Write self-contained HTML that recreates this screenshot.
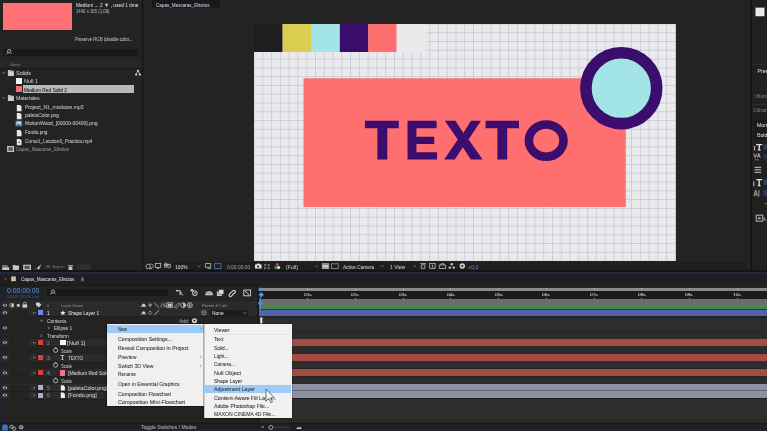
<!DOCTYPE html><html><head><meta charset="utf-8"><style>
html,body{margin:0;padding:0;width:767px;height:431px;overflow:hidden;background:#232323;}
body{position:relative;font-family:"Liberation Sans",sans-serif;}
.t{position:absolute;white-space:nowrap;line-height:1;transform-origin:0 0;-webkit-text-stroke:0.07px currentColor;filter:blur(0.25px);}
.r{position:absolute;}
svg.o{position:absolute;left:0;top:0;}
</style></head><body>
<div class="r" style="left:142px;top:0px;width:1px;height:271px;background:#151515;"></div>
<div class="r" style="left:143px;top:0px;width:2px;height:271px;background:#1f1f1f;"></div>
<div class="r" style="left:745px;top:0px;width:1.5px;height:271px;background:#1e1e1e;"></div>
<div class="r" style="left:750px;top:0px;width:2px;height:271px;background:#141414;"></div>
<div class="r" style="left:3px;top:3px;width:69px;height:27px;background:#ff6f74;"></div>
<div class="t" style="left:75.69px;top:3px;font-size:5.2px;color:#d2d2d2;transform:scaleX(0.937);">Medium ... 2 <span style="font-size:5.6px">&#9660;</span> , used 1 time</div>
<div class="t" style="left:75.72px;top:10px;font-size:4.6px;color:#a8a8a8;transform:scaleX(0.928);">1440 x 185 (1,00)</div>
<div class="t" style="left:74.69px;top:37px;font-size:5.2px;color:#b8b8b8;transform:scaleX(0.823);">Preserve RGB (disable color...</div>
<div class="r" style="left:3px;top:48.6px;width:134.5px;height:7px;background:#191919;"></div>
<svg class="o" width="767" height="431"><g stroke="#d0d0d0" stroke-width="0.8" fill="none"><circle cx="9.2" cy="51.2" r="1.7"/><path d="M8 52.5 L6.3 54.3"/></g><path d="M10.6 53.2 h1.5 l-0.75 0.9z" fill="#d0d0d0"/></svg>
<div class="r" style="left:0px;top:59.5px;width:142px;height:8.7px;background:#272727;"></div>
<div class="r" style="left:0px;top:68.2px;width:142px;height:0.8px;background:#1b1b1b;"></div>
<div class="t" style="left:9.75px;top:63px;font-size:4.2px;color:#707070;transform:scaleX(0.930);">Name</div>
<svg class="o" width="767" height="431"><path d="M2.4 72.2 l1.3 1.3 l1.3 -1.3" stroke="#a0a0a0" stroke-width="0.7" fill="none"/><path d="M7.9 70 h2.4 l0.6 0.8 h3 v5.3 h-6z" fill="#cccccc"/><path d="M7.9 71.6 h6" stroke="#9a9a9a" stroke-width="0.4"/></svg>
<div class="t" style="left:15.89px;top:71px;font-size:5.2px;color:#c0c0c0;transform:scaleX(1.065);">Solids</div>
<div class="r" style="left:16px;top:77.8px;width:6.3px;height:6.4px;background:#f6f6f6;"></div>
<div class="t" style="left:24.09px;top:79px;font-size:5.2px;color:#c0c0c0;transform:scaleX(1.059);">Null 1</div>
<div class="r" style="left:22.6px;top:85px;width:111.5px;height:8.1px;background:#b9b9b9;"></div>
<div class="r" style="left:16px;top:86px;width:6.3px;height:6.2px;background:#f36f7d;"></div>
<div class="t" style="left:24.09px;top:88px;font-size:5.2px;color:#222222;transform:scaleX(0.920);">Medium Red Solid 2</div>
<svg class="o" width="767" height="431"><path d="M2.4 97.2 l1.3 1.3 l1.3 -1.3" stroke="#a0a0a0" stroke-width="0.7" fill="none"/><path d="M7.9 95 h2.4 l0.6 0.8 h3 v5.3 h-6z" fill="#cccccc"/><path d="M7.9 96.6 h6" stroke="#9a9a9a" stroke-width="0.4"/></svg>
<div class="t" style="left:15.89px;top:96px;font-size:5.2px;color:#c0c0c0;transform:scaleX(0.982);">Materiales</div>
<svg class="o" width="767" height="431"><path d="M16.8 104.9 h3.2 l1.5 1.5 v4.9 h-4.7z" fill="#e8e8e8"/></svg>
<div class="t" style="left:24.69px;top:105px;font-size:5.2px;color:#c0c0c0;transform:scaleX(0.966);">Project_N1_mixdown.mp3</div>
<svg class="o" width="767" height="431"><path d="M16.8 112.9 h3.2 l1.5 1.5 v4.9 h-4.7z" fill="#e8e8e8"/></svg>
<div class="t" style="left:24.69px;top:113px;font-size:5.2px;color:#c0c0c0;transform:scaleX(0.935);">paletaColor.png</div>
<svg class="o" width="767" height="431"><rect x="15.2" y="120.4" width="7.2" height="6.1" rx="1" fill="#3f5f86"/><rect x="16.4" y="121.4" width="4.8" height="4" fill="#c7d3e2"/><path d="M16.4 125.4 l2 -2 l2.8 2z" fill="#45688f"/></svg>
<div class="t" style="left:24.69px;top:121px;font-size:5.2px;color:#c0c0c0;transform:scaleX(0.960);">MotionWood_[00000-00400].png</div>
<svg class="o" width="767" height="431"><path d="M16.8 129.9 h3.2 l1.5 1.5 v4.9 h-4.7z" fill="#e8e8e8"/></svg>
<div class="t" style="left:24.69px;top:130px;font-size:5.2px;color:#c0c0c0;transform:scaleX(0.906);">Fondo.png</div>
<svg class="o" width="767" height="431"><path d="M16.8 138.9 h3.2 l1.5 1.5 v4.9 h-4.7z" fill="#e8e8e8"/><path d="M17.8 142.9 h2.6 l-1.3 -1.9z" fill="#3c6aa8"/></svg>
<div class="t" style="left:24.69px;top:139px;font-size:5.2px;color:#c0c0c0;transform:scaleX(0.918);">Curso1_Leccion6_Practica.mp4</div>
<svg class="o" width="767" height="431"><rect x="7.1" y="146" width="7" height="6" fill="#c4c4c4"/><rect x="8.3" y="147.2" width="4.6" height="3.6" fill="#5e5e5e"/></svg>
<div class="t" style="left:15.89px;top:147px;font-size:5.2px;color:#8c8c8c;transform:scaleX(0.876);">Capas_Mascaras_Efectos</div>
<svg class="o" width="767" height="431"><g fill="#d4d4d4"><circle cx="138" cy="70.8" r="1.1"/><circle cx="136.1" cy="74.6" r="1.1"/><circle cx="139.9" cy="74.6" r="1.1"/></g><path d="M138 70.8 L136.1 74.6 M138 70.8 L139.9 74.6" stroke="#d4d4d4" stroke-width="0.7"/></svg>
<svg class="o" width="767" height="431"><g fill="#c6c6c6">
<path d="M2.2 265.6 h5.5 v0.9 h-5.5z M2.2 267.3 h7 v3 h-7z"/>
<path d="M12.8 264.9 h2.2 l0.6 0.7 h3.4 v4.5 h-6.2z"/>
<rect x="23.2" y="264.7" width="7.8" height="5.5"/>
<path d="M34.4 270.2 L41.3 264.3 L38.6 270.3 L37.6 268.2 z"/>
<path d="M67.8 265.3 h5.4 v0.8 h-5.4z M68.6 266.5 h3.8 v3.9 h-3.8z"/>
</g><rect x="24.5" y="265.8" width="5.2" height="3.3" fill="#5a5a5a"/>
<rect x="76.5" y="264.6" width="15" height="5.6" rx="2.8" fill="#2f2f2f"/></svg>
<div class="t" style="left:45.75px;top:265px;font-size:4.2px;color:#6a6a6a;transform:scaleX(1.831);">8 bpc</div>
<div class="r" style="left:152.3px;top:0px;width:67.3px;height:7.5px;background:#181818;"></div>
<div class="t" style="left:156.20px;top:3px;font-size:5.0px;color:#b4c2dc;transform:scaleX(0.916);">Capas_Mascaras_Efectos</div>
<svg class="o" width="767" height="431"><defs><clipPath id="cp"><rect x="254" y="24" width="422" height="237"/></clipPath></defs><rect x="254" y="24" width="422" height="237" fill="#ededf0"/><g clip-path="url(#cp)"><g stroke="#e2e1e7" stroke-width="0.3"><line x1="256.19" y1="24" x2="256.19" y2="261"/><line x1="258.39" y1="24" x2="258.39" y2="261"/><line x1="260.58" y1="24" x2="260.58" y2="261"/><line x1="264.98" y1="24" x2="264.98" y2="261"/><line x1="267.17" y1="24" x2="267.17" y2="261"/><line x1="269.37" y1="24" x2="269.37" y2="261"/><line x1="273.75" y1="24" x2="273.75" y2="261"/><line x1="275.95" y1="24" x2="275.95" y2="261"/><line x1="278.14" y1="24" x2="278.14" y2="261"/><line x1="282.53" y1="24" x2="282.53" y2="261"/><line x1="284.73" y1="24" x2="284.73" y2="261"/><line x1="286.93" y1="24" x2="286.93" y2="261"/><line x1="291.31" y1="24" x2="291.31" y2="261"/><line x1="293.51" y1="24" x2="293.51" y2="261"/><line x1="295.70" y1="24" x2="295.70" y2="261"/><line x1="300.10" y1="24" x2="300.10" y2="261"/><line x1="302.29" y1="24" x2="302.29" y2="261"/><line x1="304.49" y1="24" x2="304.49" y2="261"/><line x1="308.88" y1="24" x2="308.88" y2="261"/><line x1="311.07" y1="24" x2="311.07" y2="261"/><line x1="313.26" y1="24" x2="313.26" y2="261"/><line x1="317.65" y1="24" x2="317.65" y2="261"/><line x1="319.85" y1="24" x2="319.85" y2="261"/><line x1="322.05" y1="24" x2="322.05" y2="261"/><line x1="326.44" y1="24" x2="326.44" y2="261"/><line x1="328.63" y1="24" x2="328.63" y2="261"/><line x1="330.82" y1="24" x2="330.82" y2="261"/><line x1="335.21" y1="24" x2="335.21" y2="261"/><line x1="337.41" y1="24" x2="337.41" y2="261"/><line x1="339.61" y1="24" x2="339.61" y2="261"/><line x1="344.00" y1="24" x2="344.00" y2="261"/><line x1="346.19" y1="24" x2="346.19" y2="261"/><line x1="348.38" y1="24" x2="348.38" y2="261"/><line x1="352.77" y1="24" x2="352.77" y2="261"/><line x1="354.97" y1="24" x2="354.97" y2="261"/><line x1="357.16" y1="24" x2="357.16" y2="261"/><line x1="361.56" y1="24" x2="361.56" y2="261"/><line x1="363.75" y1="24" x2="363.75" y2="261"/><line x1="365.94" y1="24" x2="365.94" y2="261"/><line x1="370.33" y1="24" x2="370.33" y2="261"/><line x1="372.53" y1="24" x2="372.53" y2="261"/><line x1="374.73" y1="24" x2="374.73" y2="261"/><line x1="379.12" y1="24" x2="379.12" y2="261"/><line x1="381.31" y1="24" x2="381.31" y2="261"/><line x1="383.50" y1="24" x2="383.50" y2="261"/><line x1="387.89" y1="24" x2="387.89" y2="261"/><line x1="390.09" y1="24" x2="390.09" y2="261"/><line x1="392.28" y1="24" x2="392.28" y2="261"/><line x1="396.67" y1="24" x2="396.67" y2="261"/><line x1="398.87" y1="24" x2="398.87" y2="261"/><line x1="401.06" y1="24" x2="401.06" y2="261"/><line x1="405.45" y1="24" x2="405.45" y2="261"/><line x1="407.65" y1="24" x2="407.65" y2="261"/><line x1="409.85" y1="24" x2="409.85" y2="261"/><line x1="414.24" y1="24" x2="414.24" y2="261"/><line x1="416.43" y1="24" x2="416.43" y2="261"/><line x1="418.62" y1="24" x2="418.62" y2="261"/><line x1="423.01" y1="24" x2="423.01" y2="261"/><line x1="425.21" y1="24" x2="425.21" y2="261"/><line x1="427.40" y1="24" x2="427.40" y2="261"/><line x1="431.79" y1="24" x2="431.79" y2="261"/><line x1="433.99" y1="24" x2="433.99" y2="261"/><line x1="436.18" y1="24" x2="436.18" y2="261"/><line x1="440.57" y1="24" x2="440.57" y2="261"/><line x1="442.77" y1="24" x2="442.77" y2="261"/><line x1="444.96" y1="24" x2="444.96" y2="261"/><line x1="449.36" y1="24" x2="449.36" y2="261"/><line x1="451.55" y1="24" x2="451.55" y2="261"/><line x1="453.75" y1="24" x2="453.75" y2="261"/><line x1="458.13" y1="24" x2="458.13" y2="261"/><line x1="460.33" y1="24" x2="460.33" y2="261"/><line x1="462.52" y1="24" x2="462.52" y2="261"/><line x1="466.91" y1="24" x2="466.91" y2="261"/><line x1="469.11" y1="24" x2="469.11" y2="261"/><line x1="471.30" y1="24" x2="471.30" y2="261"/><line x1="475.69" y1="24" x2="475.69" y2="261"/><line x1="477.89" y1="24" x2="477.89" y2="261"/><line x1="480.08" y1="24" x2="480.08" y2="261"/><line x1="484.48" y1="24" x2="484.48" y2="261"/><line x1="486.67" y1="24" x2="486.67" y2="261"/><line x1="488.87" y1="24" x2="488.87" y2="261"/><line x1="493.25" y1="24" x2="493.25" y2="261"/><line x1="495.45" y1="24" x2="495.45" y2="261"/><line x1="497.64" y1="24" x2="497.64" y2="261"/><line x1="502.03" y1="24" x2="502.03" y2="261"/><line x1="504.23" y1="24" x2="504.23" y2="261"/><line x1="506.42" y1="24" x2="506.42" y2="261"/><line x1="510.81" y1="24" x2="510.81" y2="261"/><line x1="513.01" y1="24" x2="513.01" y2="261"/><line x1="515.20" y1="24" x2="515.20" y2="261"/><line x1="519.60" y1="24" x2="519.60" y2="261"/><line x1="521.79" y1="24" x2="521.79" y2="261"/><line x1="523.98" y1="24" x2="523.98" y2="261"/><line x1="528.38" y1="24" x2="528.38" y2="261"/><line x1="530.57" y1="24" x2="530.57" y2="261"/><line x1="532.76" y1="24" x2="532.76" y2="261"/><line x1="537.15" y1="24" x2="537.15" y2="261"/><line x1="539.35" y1="24" x2="539.35" y2="261"/><line x1="541.54" y1="24" x2="541.54" y2="261"/><line x1="545.93" y1="24" x2="545.93" y2="261"/><line x1="548.13" y1="24" x2="548.13" y2="261"/><line x1="550.33" y1="24" x2="550.33" y2="261"/><line x1="554.71" y1="24" x2="554.71" y2="261"/><line x1="556.91" y1="24" x2="556.91" y2="261"/><line x1="559.11" y1="24" x2="559.11" y2="261"/><line x1="563.50" y1="24" x2="563.50" y2="261"/><line x1="565.69" y1="24" x2="565.69" y2="261"/><line x1="567.88" y1="24" x2="567.88" y2="261"/><line x1="572.27" y1="24" x2="572.27" y2="261"/><line x1="574.47" y1="24" x2="574.47" y2="261"/><line x1="576.66" y1="24" x2="576.66" y2="261"/><line x1="581.05" y1="24" x2="581.05" y2="261"/><line x1="583.25" y1="24" x2="583.25" y2="261"/><line x1="585.44" y1="24" x2="585.44" y2="261"/><line x1="589.84" y1="24" x2="589.84" y2="261"/><line x1="592.03" y1="24" x2="592.03" y2="261"/><line x1="594.22" y1="24" x2="594.22" y2="261"/><line x1="598.62" y1="24" x2="598.62" y2="261"/><line x1="600.81" y1="24" x2="600.81" y2="261"/><line x1="603.00" y1="24" x2="603.00" y2="261"/><line x1="607.39" y1="24" x2="607.39" y2="261"/><line x1="609.59" y1="24" x2="609.59" y2="261"/><line x1="611.78" y1="24" x2="611.78" y2="261"/><line x1="616.17" y1="24" x2="616.17" y2="261"/><line x1="618.37" y1="24" x2="618.37" y2="261"/><line x1="620.57" y1="24" x2="620.57" y2="261"/><line x1="624.95" y1="24" x2="624.95" y2="261"/><line x1="627.15" y1="24" x2="627.15" y2="261"/><line x1="629.35" y1="24" x2="629.35" y2="261"/><line x1="633.73" y1="24" x2="633.73" y2="261"/><line x1="635.93" y1="24" x2="635.93" y2="261"/><line x1="638.12" y1="24" x2="638.12" y2="261"/><line x1="642.51" y1="24" x2="642.51" y2="261"/><line x1="644.71" y1="24" x2="644.71" y2="261"/><line x1="646.90" y1="24" x2="646.90" y2="261"/><line x1="651.29" y1="24" x2="651.29" y2="261"/><line x1="653.49" y1="24" x2="653.49" y2="261"/><line x1="655.68" y1="24" x2="655.68" y2="261"/><line x1="660.08" y1="24" x2="660.08" y2="261"/><line x1="662.27" y1="24" x2="662.27" y2="261"/><line x1="664.46" y1="24" x2="664.46" y2="261"/><line x1="668.86" y1="24" x2="668.86" y2="261"/><line x1="671.05" y1="24" x2="671.05" y2="261"/><line x1="673.24" y1="24" x2="673.24" y2="261"/><line x1="254" y1="26.20" x2="676" y2="26.20"/><line x1="254" y1="28.39" x2="676" y2="28.39"/><line x1="254" y1="30.59" x2="676" y2="30.59"/><line x1="254" y1="34.98" x2="676" y2="34.98"/><line x1="254" y1="37.17" x2="676" y2="37.17"/><line x1="254" y1="39.36" x2="676" y2="39.36"/><line x1="254" y1="43.75" x2="676" y2="43.75"/><line x1="254" y1="45.95" x2="676" y2="45.95"/><line x1="254" y1="48.14" x2="676" y2="48.14"/><line x1="254" y1="52.53" x2="676" y2="52.53"/><line x1="254" y1="54.73" x2="676" y2="54.73"/><line x1="254" y1="56.92" x2="676" y2="56.92"/><line x1="254" y1="61.31" x2="676" y2="61.31"/><line x1="254" y1="63.51" x2="676" y2="63.51"/><line x1="254" y1="65.70" x2="676" y2="65.70"/><line x1="254" y1="70.09" x2="676" y2="70.09"/><line x1="254" y1="72.29" x2="676" y2="72.29"/><line x1="254" y1="74.48" x2="676" y2="74.48"/><line x1="254" y1="78.88" x2="676" y2="78.88"/><line x1="254" y1="81.07" x2="676" y2="81.07"/><line x1="254" y1="83.26" x2="676" y2="83.26"/><line x1="254" y1="87.66" x2="676" y2="87.66"/><line x1="254" y1="89.85" x2="676" y2="89.85"/><line x1="254" y1="92.05" x2="676" y2="92.05"/><line x1="254" y1="96.43" x2="676" y2="96.43"/><line x1="254" y1="98.63" x2="676" y2="98.63"/><line x1="254" y1="100.82" x2="676" y2="100.82"/><line x1="254" y1="105.21" x2="676" y2="105.21"/><line x1="254" y1="107.41" x2="676" y2="107.41"/><line x1="254" y1="109.60" x2="676" y2="109.60"/><line x1="254" y1="113.99" x2="676" y2="113.99"/><line x1="254" y1="116.19" x2="676" y2="116.19"/><line x1="254" y1="118.38" x2="676" y2="118.38"/><line x1="254" y1="122.77" x2="676" y2="122.77"/><line x1="254" y1="124.97" x2="676" y2="124.97"/><line x1="254" y1="127.16" x2="676" y2="127.16"/><line x1="254" y1="131.56" x2="676" y2="131.56"/><line x1="254" y1="133.75" x2="676" y2="133.75"/><line x1="254" y1="135.94" x2="676" y2="135.94"/><line x1="254" y1="140.33" x2="676" y2="140.33"/><line x1="254" y1="142.53" x2="676" y2="142.53"/><line x1="254" y1="144.72" x2="676" y2="144.72"/><line x1="254" y1="149.12" x2="676" y2="149.12"/><line x1="254" y1="151.31" x2="676" y2="151.31"/><line x1="254" y1="153.50" x2="676" y2="153.50"/><line x1="254" y1="157.89" x2="676" y2="157.89"/><line x1="254" y1="160.09" x2="676" y2="160.09"/><line x1="254" y1="162.28" x2="676" y2="162.28"/><line x1="254" y1="166.67" x2="676" y2="166.67"/><line x1="254" y1="168.87" x2="676" y2="168.87"/><line x1="254" y1="171.06" x2="676" y2="171.06"/><line x1="254" y1="175.45" x2="676" y2="175.45"/><line x1="254" y1="177.65" x2="676" y2="177.65"/><line x1="254" y1="179.84" x2="676" y2="179.84"/><line x1="254" y1="184.23" x2="676" y2="184.23"/><line x1="254" y1="186.43" x2="676" y2="186.43"/><line x1="254" y1="188.62" x2="676" y2="188.62"/><line x1="254" y1="193.01" x2="676" y2="193.01"/><line x1="254" y1="195.21" x2="676" y2="195.21"/><line x1="254" y1="197.41" x2="676" y2="197.41"/><line x1="254" y1="201.79" x2="676" y2="201.79"/><line x1="254" y1="203.99" x2="676" y2="203.99"/><line x1="254" y1="206.18" x2="676" y2="206.18"/><line x1="254" y1="210.57" x2="676" y2="210.57"/><line x1="254" y1="212.77" x2="676" y2="212.77"/><line x1="254" y1="214.96" x2="676" y2="214.96"/><line x1="254" y1="219.35" x2="676" y2="219.35"/><line x1="254" y1="221.55" x2="676" y2="221.55"/><line x1="254" y1="223.74" x2="676" y2="223.74"/><line x1="254" y1="228.13" x2="676" y2="228.13"/><line x1="254" y1="230.33" x2="676" y2="230.33"/><line x1="254" y1="232.52" x2="676" y2="232.52"/><line x1="254" y1="236.91" x2="676" y2="236.91"/><line x1="254" y1="239.11" x2="676" y2="239.11"/><line x1="254" y1="241.30" x2="676" y2="241.30"/><line x1="254" y1="245.69" x2="676" y2="245.69"/><line x1="254" y1="247.89" x2="676" y2="247.89"/><line x1="254" y1="250.08" x2="676" y2="250.08"/><line x1="254" y1="254.47" x2="676" y2="254.47"/><line x1="254" y1="256.67" x2="676" y2="256.67"/><line x1="254" y1="258.87" x2="676" y2="258.87"/></g><g stroke="#bdbcc6" stroke-width="0.65"><line x1="254.00" y1="24" x2="254.00" y2="261"/><line x1="262.78" y1="24" x2="262.78" y2="261"/><line x1="271.56" y1="24" x2="271.56" y2="261"/><line x1="280.34" y1="24" x2="280.34" y2="261"/><line x1="289.12" y1="24" x2="289.12" y2="261"/><line x1="297.90" y1="24" x2="297.90" y2="261"/><line x1="306.68" y1="24" x2="306.68" y2="261"/><line x1="315.46" y1="24" x2="315.46" y2="261"/><line x1="324.24" y1="24" x2="324.24" y2="261"/><line x1="333.02" y1="24" x2="333.02" y2="261"/><line x1="341.80" y1="24" x2="341.80" y2="261"/><line x1="350.58" y1="24" x2="350.58" y2="261"/><line x1="359.36" y1="24" x2="359.36" y2="261"/><line x1="368.14" y1="24" x2="368.14" y2="261"/><line x1="376.92" y1="24" x2="376.92" y2="261"/><line x1="385.70" y1="24" x2="385.70" y2="261"/><line x1="394.48" y1="24" x2="394.48" y2="261"/><line x1="403.26" y1="24" x2="403.26" y2="261"/><line x1="412.04" y1="24" x2="412.04" y2="261"/><line x1="420.82" y1="24" x2="420.82" y2="261"/><line x1="429.60" y1="24" x2="429.60" y2="261"/><line x1="438.38" y1="24" x2="438.38" y2="261"/><line x1="447.16" y1="24" x2="447.16" y2="261"/><line x1="455.94" y1="24" x2="455.94" y2="261"/><line x1="464.72" y1="24" x2="464.72" y2="261"/><line x1="473.50" y1="24" x2="473.50" y2="261"/><line x1="482.28" y1="24" x2="482.28" y2="261"/><line x1="491.06" y1="24" x2="491.06" y2="261"/><line x1="499.84" y1="24" x2="499.84" y2="261"/><line x1="508.62" y1="24" x2="508.62" y2="261"/><line x1="517.40" y1="24" x2="517.40" y2="261"/><line x1="526.18" y1="24" x2="526.18" y2="261"/><line x1="534.96" y1="24" x2="534.96" y2="261"/><line x1="543.74" y1="24" x2="543.74" y2="261"/><line x1="552.52" y1="24" x2="552.52" y2="261"/><line x1="561.30" y1="24" x2="561.30" y2="261"/><line x1="570.08" y1="24" x2="570.08" y2="261"/><line x1="578.86" y1="24" x2="578.86" y2="261"/><line x1="587.64" y1="24" x2="587.64" y2="261"/><line x1="596.42" y1="24" x2="596.42" y2="261"/><line x1="605.20" y1="24" x2="605.20" y2="261"/><line x1="613.98" y1="24" x2="613.98" y2="261"/><line x1="622.76" y1="24" x2="622.76" y2="261"/><line x1="631.54" y1="24" x2="631.54" y2="261"/><line x1="640.32" y1="24" x2="640.32" y2="261"/><line x1="649.10" y1="24" x2="649.10" y2="261"/><line x1="657.88" y1="24" x2="657.88" y2="261"/><line x1="666.66" y1="24" x2="666.66" y2="261"/><line x1="675.44" y1="24" x2="675.44" y2="261"/><line x1="254" y1="24.00" x2="676" y2="24.00"/><line x1="254" y1="32.78" x2="676" y2="32.78"/><line x1="254" y1="41.56" x2="676" y2="41.56"/><line x1="254" y1="50.34" x2="676" y2="50.34"/><line x1="254" y1="59.12" x2="676" y2="59.12"/><line x1="254" y1="67.90" x2="676" y2="67.90"/><line x1="254" y1="76.68" x2="676" y2="76.68"/><line x1="254" y1="85.46" x2="676" y2="85.46"/><line x1="254" y1="94.24" x2="676" y2="94.24"/><line x1="254" y1="103.02" x2="676" y2="103.02"/><line x1="254" y1="111.80" x2="676" y2="111.80"/><line x1="254" y1="120.58" x2="676" y2="120.58"/><line x1="254" y1="129.36" x2="676" y2="129.36"/><line x1="254" y1="138.14" x2="676" y2="138.14"/><line x1="254" y1="146.92" x2="676" y2="146.92"/><line x1="254" y1="155.70" x2="676" y2="155.70"/><line x1="254" y1="164.48" x2="676" y2="164.48"/><line x1="254" y1="173.26" x2="676" y2="173.26"/><line x1="254" y1="182.04" x2="676" y2="182.04"/><line x1="254" y1="190.82" x2="676" y2="190.82"/><line x1="254" y1="199.60" x2="676" y2="199.60"/><line x1="254" y1="208.38" x2="676" y2="208.38"/><line x1="254" y1="217.16" x2="676" y2="217.16"/><line x1="254" y1="225.94" x2="676" y2="225.94"/><line x1="254" y1="234.72" x2="676" y2="234.72"/><line x1="254" y1="243.50" x2="676" y2="243.50"/><line x1="254" y1="252.28" x2="676" y2="252.28"/><line x1="254" y1="261.06" x2="676" y2="261.06"/></g></g><rect x="254" y="24" width="28.65" height="28" fill="#1e1e1e"/><rect x="282.6" y="24" width="28.45" height="28" fill="#dacd50"/><rect x="311" y="24" width="28.85" height="28" fill="#a3e4e6"/><rect x="339.8" y="24" width="28.55" height="28" fill="#3b0e6e"/><rect x="368.3" y="24" width="28.45" height="28" fill="#ff6f70"/><rect x="396.7" y="24" width="29.35" height="28" fill="#eaeaea"/><rect x="303.5" y="78.3" width="322.3" height="128.7" fill="#ff6f70"/><path d="M326.5 78.3 V100.6 H303.5" stroke="#f26a6c" stroke-width="0.6" fill="none"/><circle cx="621.3" cy="88.2" r="35.4" fill="#a3e4e6" stroke="#3b0e6e" stroke-width="11.6"/><g fill="#3b0e6e"><path d="M364.9 120.8 H398.8 V128.2 H387.3 V159.6 H377.4 V128.2 H364.9z"/><path d="M407.5 120.8 H436.6 V128.2 H416.4 V136.8 H434.2 V144 H416.4 V152.2 H437.1 V159.6 H407.5z"/><path d="M444.8 120.8 H455.4 L463.3 133 L471 120.8 H481 L468.6 139.6 L482.6 159.6 H470.8 L462.8 147.2 L454.8 159.6 H444.2 L457.8 139.6z"/><path d="M485.6 120.8 H519 V128.2 H507.2 V159.6 H497.4 V128.2 H485.6z"/></g><ellipse cx="546.2" cy="140.6" rx="17.3" ry="16.1" fill="none" stroke="#3b0e6e" stroke-width="8.6"/></svg>
<div class="r" style="left:145px;top:261.5px;width:600px;height:9.5px;background:#1e1e1e;"></div>
<svg class="o" width="767" height="431"><g stroke="#c8c8c8" stroke-width="0.75" fill="none">
<path d="M146 266.3 a2.2 2 0 1 1 2.2 1.9 l-1.4 0.6 z"/><path d="M149.5 264.7 a2.2 2 0 1 1 1.2 3.3 l0.8 0.7 h-2.5"/>
<rect x="155.3" y="263.6" width="5.4" height="3.8"/><path d="M156.8 268.4 h2.5"/>
<path d="M164.3 264.3 h6.3 M165.8 266 a1.5 1.5 0 1 1 0.01 0z"/><circle cx="165.8" cy="266.2" r="1.5"/><circle cx="169.2" cy="266.2" r="1.5"/>
<path d="M205.4 263.5 h5.2 v3.8 h-5.2z M207.5 268.3 h3.5"/>
<path d="M214.5 268.5 v-4.8 h3.6 l2.8 -0.4 v5.2z" stroke="#5a86c8"/>
<path d="M255 264.5 h1.5 l0.8 -1 h2 l0.8 1 h1.5 v4 h-6.6z" fill="#e0e0e0" stroke="none"/>
<circle cx="258.1" cy="266.5" r="1.1" fill="#1e1e1e" stroke="none"/>
<rect x="322.3" y="263.8" width="6.4" height="4.6" stroke="#d8d8d8"/>
<rect x="331.4" y="263.8" width="6.8" height="4.6" stroke="#9a9a9a"/>
<path d="M420.2 263.6 h5.8 M421.3 264.8 v3.6 h3.6 v-3.6z"/>
<rect x="429.7" y="263.5" width="5.4" height="4.8"/><path d="M432.4 264.5 v2.5 l1.8 1.6"/>
<path d="M439.3 265 h6.3 v3.5 h-6.3z M441 265 v-1.2 h3 v1.2"/>
</g>
<rect x="322.9" y="264.5" width="5.2" height="3.3" fill="#cfcfcf"/>
<g fill="#c8c8c8" opacity="0.45"><rect x="264" y="264" width="2.2" height="2.2"/><rect x="267.6" y="264" width="2.2" height="2.2"/><rect x="264" y="267" width="2.2" height="2.2"/><rect x="267.6" y="267" width="2.2" height="2.2"/></g>
<circle cx="277.3" cy="264.6" r="1.5" fill="#d04a4a"/><circle cx="276" cy="267.4" r="1.5" fill="#4a9a4a"/><circle cx="278.6" cy="267.4" r="1.5" fill="#e8e8e8"/>
<g fill="#c8c8c8"><circle cx="451.8" cy="264.2" r="1.2"/><circle cx="449.8" cy="267.6" r="1.2"/><circle cx="453.8" cy="267.6" r="1.2"/></g>
<circle cx="462.3" cy="266" r="2.7" fill="#d0d0d0"/><circle cx="462.3" cy="266" r="1.1" fill="#1e1e1e"/>
<g stroke="#a8a8a8" stroke-width="0.6" fill="none"><path d="M197.8 265.5 l1.4 1.4 l1.4 -1.4"/><path d="M315.2 265.5 l1.4 1.4 l1.4 -1.4"/><path d="M380.8 265.5 l1.4 1.4 l1.4 -1.4"/><path d="M413.2 265.5 l1.4 1.4 l1.4 -1.4"/></g></svg>
<div class="t" style="left:175.21px;top:266px;font-size:4.8px;color:#cccccc;transform:scaleX(1.000);">100%</div>
<div class="t" style="left:226.71px;top:266px;font-size:4.8px;color:#8c8c8c;transform:scaleX(1.022);">0:00:00:00</div>
<div class="t" style="left:285.71px;top:266px;font-size:4.8px;color:#bcbcbc;transform:scaleX(1.090);">(Full)</div>
<div class="t" style="left:342.91px;top:266px;font-size:4.8px;color:#c0c0c0;transform:scaleX(0.987);">Active Camera</div>
<div class="t" style="left:390.31px;top:266px;font-size:4.8px;color:#c0c0c0;transform:scaleX(1.055);">1 View</div>
<div class="t" style="left:467.51px;top:266px;font-size:4.8px;color:#4d84c8;transform:scaleX(1.111);">+0,0</div>
<div class="r" style="left:752px;top:0px;width:15px;height:271px;background:#202020;"></div>
<svg class="o" width="767" height="431"><rect x="755.3" y="7.5" width="9.3" height="8.7" fill="#f0f0f0" stroke="#555" stroke-width="0.5"/><path d="M757.5 10 h5 M757.5 11.8 h5 M757.5 13.6 h5" stroke="#c8c8c8" stroke-width="0.5"/></svg>
<div class="r" style="left:752px;top:63.5px;width:15px;height:0.8px;background:#2c2c2c;"></div>
<div class="t" style="left:757.49px;top:69px;font-size:5.2px;color:#d0d0d0;">Prese</div>
<div class="t" style="left:754.52px;top:95px;font-size:4.6px;color:#7a7a7a;">Ubuntu</div>
<div class="r" style="left:752px;top:103.5px;width:15px;height:0.6px;background:#2c2c2c;"></div>
<div class="t" style="left:753.59px;top:108px;font-size:5.2px;color:#7c7c7c;">Librar</div>
<div class="r" style="left:753px;top:119.3px;width:14px;height:10.5px;background:#1a1a1a;"></div>
<div class="r" style="left:753px;top:131px;width:14px;height:9px;background:#1a1a1a;"></div>
<div class="t" style="left:756.99px;top:122.6px;font-size:5.2px;color:#d0d0d0;">Mon</div>
<div class="t" style="left:756.99px;top:132.5px;font-size:5.2px;color:#c8c8c8;">Bold</div>
<svg class="o" width="767" height="431"><g fill="#e0e0e0">
<path d="M756.2 144 h6 v1.2 h-2.3 v4.4 h0.8 v0.9 h-3 v-0.9 h0.8 v-4.4 h-2.3z"/>
<path d="M753.4 146.4 h2.4 v0.7 h-0.8 v2.6 h0.5 v0.6 h-1.8 v-0.6 h0.5 v-2.6 h-0.8z"/>
<path d="M756.2 179 h6 v1.3 h-2.3 v5 h0.8 v1 h-3 v-1 h0.8 v-5 h-2.3z"/>
<path d="M753.4 181.6 h0.9 v4.6 h-0.9z"/>
</g>
<g stroke="#dcdcdc" stroke-width="0.7" fill="none">
<path d="M753.6 153.6 l1.6 4 l1.6 -4 M757.4 157.6 l1.4 -4 l1.4 4 M758 156.2 h1.6"/>
<path d="M754.8 159.8 h4" stroke-width="0.5"/>
<path d="M754.6 167.3 h6.6 M754.6 169.8 h6.6 M754.6 172.3 h6.6" stroke-width="0.9"/>
<path d="M754 196.3 l1.7 -6 l1.7 6 M754.7 194.2 h2 M758.8 190 v6.5"/>
<rect x="756.3" y="215.2" width="6.4" height="6" stroke="#b8b8b8" stroke-width="1"/>
<path d="M764.6 203.6 h2.4" stroke="#9a9a9a"/>
</g>
<rect x="758.2" y="217.3" width="2.4" height="1.9" fill="#b8b8b8"/>
<rect x="763.5" y="144.5" width="3.5" height="5" fill="#2d3f5c"/><rect x="763.5" y="154" width="3.5" height="5" fill="#2a2f38"/>
<rect x="763.5" y="179.5" width="3.5" height="5.5" fill="#2d3f5c"/><rect x="763.5" y="190" width="3.5" height="5.5" fill="#2d3f5c"/>
<path d="M764.2 217 v3 h2" stroke="#b8b8b8" stroke-width="0.8" fill="none"/></svg>
<div class="r" style="left:0px;top:271px;width:767px;height:160px;background:#232323;"></div>
<div class="r" style="left:0px;top:270.4px;width:767px;height:1.2px;background:#141414;"></div>
<div class="r" style="left:0px;top:271.6px;width:767px;height:2.4px;background:#1f2a3d;"></div>
<div class="r" style="left:0px;top:273px;width:1.2px;height:158px;background:#1c2433;"></div>
<div class="r" style="left:0px;top:274px;width:767px;height:10.5px;background:#1f1f1f;"></div>
<svg class="o" width="767" height="431"><path d="M4.8 278.2 l1.6 1.6 M6.4 278.2 l-1.6 1.6" stroke="#8a8a8a" stroke-width="0.6"/><rect x="11.2" y="276.5" width="4.6" height="4.7" fill="#d9c9a8"/><path d="M11.2 278.8 h4.6" stroke="#a08f70" stroke-width="0.4"/><path d="M81 278 h3 M81 279.4 h3 M81 280.8 h3" stroke="#a0a0a0" stroke-width="0.7"/></svg>
<div class="t" style="left:20.79px;top:277px;font-size:5.2px;color:#d0d0d0;transform:scaleX(0.879);">Capas_Mascaras_Efectos</div>
<div class="r" style="left:1.2px;top:284.5px;width:766px;height:0.8px;background:#1a1a1a;"></div>
<div class="t" style="left:6.60px;top:288px;font-size:6.6px;color:#5596e4;transform:scaleX(1.039);-webkit-text-stroke:0;">0:00:00:00</div>
<div class="t" style="left:6.75px;top:295.3px;font-size:4.2px;color:#2d5386;transform:scaleX(0.978);">00000 (30.00 fps)</div>
<div class="r" style="left:47px;top:288.9px;width:121.1px;height:7.3px;background:#181818;"></div>
<svg class="o" width="767" height="431"><g stroke="#d0d0d0" stroke-width="0.8" fill="none"><circle cx="53" cy="291.6" r="1.6"/><path d="M51.9 292.8 L50.3 294.5"/></g><path d="M54.6 293.5 h1.4 l-0.7 0.9z" fill="#d0d0d0"/></svg>
<svg class="o" width="767" height="431"><g fill="none" stroke="#d4d4d4" stroke-width="1">
<path d="M177.2 290.8 h3 v4.2 M180.2 293 h1.8 M181.6 293.8 l1.2 1.6"/>
<circle cx="194.8" cy="293.2" r="2.4"/>
<path d="M229.5 294.2 l3.6 -3.6 a1.3 1.3 0 0 1 1.9 1.9 l-3.6 3.6 a1.3 1.3 0 0 1 -1.9 -1.9z" stroke-width="1.1"/>
<rect x="243.8" y="290" width="6.8" height="5.8" stroke-width="0.9"/><path d="M245.2 291.2 l4 3.6"/>
</g>
<circle cx="176.8" cy="290.6" r="0.9" fill="#d4d4d4"/>
<circle cx="191.9" cy="290.3" r="1.3" fill="#d4d4d4"/>
<path d="M193.6 293.2 h2.4 M194.8 292 v2.4" stroke="#d4d4d4" stroke-width="0.6"/>
<path d="M205.2 295.3 a3.9 4 0 0 1 7.8 0z" fill="#c8c8c8"/><path d="M206.6 293.4 h5" stroke="#5a5a5a" stroke-width="0.6"/>
<rect x="216.9" y="291.4" width="5" height="4.6" fill="#cfcfcf"/><rect x="218.8" y="289.6" width="5" height="4.6" fill="#dadada" stroke="#3a3a3a" stroke-width="0.5"/></svg>
<div class="r" style="left:257.4px;top:284.5px;width:2px;height:147px;background:#1a1a1a;"></div>
<div class="r" style="left:1.2px;top:301px;width:256.2px;height:8px;background:#2a2a2a;"></div>
<svg class="o" width="767" height="431"><g fill="#d0d0d0">
<path d="M2.6 305.3 q2.35 -2.8 4.7 0 q-2.35 2.8 -4.7 0z"/>
<circle cx="11.7" cy="305.3" r="2.3"/>
<circle cx="18.3" cy="305.3" r="1.5"/>
<rect x="22.5" y="304.3" width="4.6" height="3.3"/>
<path d="M36 302.4 h3.2 l2.2 2.4 l-2.6 2.6 l-2.8 -2.2z" fill="#d8c8d8"/>
</g>
<circle cx="4.95" cy="305.3" r="1" fill="#262626"/>
<path d="M11.7 303 v4.6 a2.3 2.3 0 0 1 0 -4.6z" fill="#5a5a5a"/>
<path d="M23.5 304.3 v-0.8 a1.3 1.3 0 0 1 2.6 0 v0.8" stroke="#d0d0d0" stroke-width="0.7" fill="none"/>
<g fill="#c8c8c8"><path d="M141.6 306.2 a2 2.6 0 0 1 4 0z"/><rect x="140.8" y="306" width="5.4" height="0.7"/></g><circle cx="150.1" cy="305" r="1.8" fill="#8a8a8a"/>
<g fill="none" stroke="#c8c8c8" stroke-width="0.7">
<path d="M154.2 303 l5 4.6"/><rect x="166.9" y="302.8" width="5.8" height="4.8"/>
<path d="M174.5 307 l3.6 -3.6 a1 1 0 0 1 1.4 1.4 l-3.6 3.6z"/>
<circle cx="183.2" cy="305.2" r="2.4"/><circle cx="189.8" cy="305.2" r="2.6"/><path d="M189.8 302.6 v5.2 M187.2 305.2 h5.2"/>
</g>
<rect x="167.9" y="303.7" width="3.8" height="3" fill="#c8c8c8"/>
<path d="M183.2 302.8 a2.4 2.4 0 0 1 0 4.8z" fill="#c8c8c8"/></svg>
<svg class="o" width="767" height="431"><g stroke="#c8c8c8" stroke-width="0.6" fill="none"><path d="M160.8 307.5 l1.4 -4.6"/><path d="M163.8 307.3 l0.6 -3.2 q0.2 -0.9 1 -0.8 M163.3 305 h1.6"/><path d="M165 305.3 l1.6 2 M166.6 305.3 l-1.6 2"/></g></svg>
<div class="t" style="left:46.65px;top:304px;font-size:4.2px;color:#6c6c6c;">#</div>
<div class="t" style="left:60.75px;top:304px;font-size:4.2px;color:#7e7e7e;transform:scaleX(0.982);">Layer Name</div>
<div class="t" style="left:201.55px;top:304px;font-size:4.2px;color:#848484;transform:scaleX(1.007);">Parent &amp; Link</div>
<div class="r" style="left:1.2px;top:309.0px;width:256.2px;height:7.4px;background:#2b2b2b;"></div>
<div class="r" style="left:1.2px;top:316.1px;width:256.2px;height:0.5px;background:#1f1f1f;"></div>
<svg class="o" width="767" height="431"><path d="M2.6 312.7 q2.35 -2.8 4.7 0 q-2.35 2.8 -4.7 0z" fill="#d0d0d0"/><circle cx="4.95" cy="312.7" r="1" fill="#2b2b2b"/></svg>
<div class="r" style="left:9.2px;top:309.3px;width:20px;height:6.8px;background:#232323;"></div>
<svg class="o" width="767" height="431"><path d="M33 312.09999999999997 l1.3 1.3 l1.3 -1.3" stroke="#b0b0b0" stroke-width="0.7" fill="none"/></svg>
<div class="r" style="left:37.4px;top:309.65px;width:5.9px;height:6.0px;background:#1a1a1a;"></div>
<div class="r" style="left:37.8px;top:310.05px;width:5.1px;height:5.2px;background:#7084f4;"></div>
<div class="t" style="left:46.90px;top:311px;font-size:5.0px;color:#d8d8d8;">1</div>
<svg class="o" width="767" height="431"><path d="M62.9 310.2 l0.8 1.75 l1.9 0.15 l-1.45 1.25 l0.5 1.85 l-1.75 -1 l-1.75 1 l0.5 -1.85 l-1.45 -1.25 l1.9 -0.15z" fill="#e8e8e8"/></svg>
<div class="t" style="left:68.39px;top:311px;font-size:5.2px;color:#d4d4d4;transform:scaleX(0.924);">Shape Layer 1</div>
<div class="r" style="left:1.2px;top:316.90000000000003px;width:256.2px;height:7.4px;background:#232323;"></div>
<svg class="o" width="767" height="431"><path d="M40.1 319.8 l1.5 1.2 l1.5 -1.2" stroke="#b0b0b0" stroke-width="0.7" fill="none"/></svg>
<div class="t" style="left:46.99px;top:319px;font-size:5.2px;color:#c0c0c0;transform:scaleX(0.929);">Contents</div>
<div class="r" style="left:1.2px;top:324.3px;width:256.2px;height:7.4px;background:#232323;"></div>
<svg class="o" width="767" height="431"><path d="M48.2 326.6 l1.2 1.4 l-1.2 1.4" stroke="#b0b0b0" stroke-width="0.7" fill="none"/></svg>
<div class="t" style="left:54.29px;top:326px;font-size:5.2px;color:#c0c0c0;transform:scaleX(0.927);">Ellipse 1</div>
<div class="r" style="left:1.2px;top:331.90000000000003px;width:256.2px;height:7.4px;background:#232323;"></div>
<svg class="o" width="767" height="431"><path d="M40.6 334.20000000000005 l1.2 1.4 l-1.2 1.4" stroke="#b0b0b0" stroke-width="0.7" fill="none"/></svg>
<div class="t" style="left:46.99px;top:334px;font-size:5.2px;color:#c0c0c0;transform:scaleX(0.933);">Transform</div>
<div class="r" style="left:1.2px;top:338.90000000000003px;width:256.2px;height:7.4px;background:#2b2b2b;"></div>
<div class="r" style="left:1.2px;top:346.00000000000006px;width:256.2px;height:0.5px;background:#1f1f1f;"></div>
<svg class="o" width="767" height="431"><path d="M2.6 342.6 q2.35 -2.8 4.7 0 q-2.35 2.8 -4.7 0z" fill="#d0d0d0"/><circle cx="4.95" cy="342.6" r="1" fill="#2b2b2b"/></svg>
<div class="r" style="left:9.2px;top:339.20000000000005px;width:20px;height:6.8px;background:#232323;"></div>
<svg class="o" width="767" height="431"><path d="M33 342.0 l1.3 1.3 l1.3 -1.3" stroke="#b0b0b0" stroke-width="0.7" fill="none"/></svg>
<div class="r" style="left:37.4px;top:339.55px;width:5.9px;height:6.0px;background:#1a1a1a;"></div>
<div class="r" style="left:37.8px;top:339.95000000000005px;width:5.1px;height:5.2px;background:#d2433c;"></div>
<div class="t" style="left:46.90px;top:341px;font-size:5.0px;color:#8a8a9c;">2</div>
<div class="r" style="left:60px;top:340.1px;width:5.7px;height:5.1px;background:#f4f4f4;"></div>
<div class="t" style="left:67.49px;top:341px;font-size:5.2px;color:#c8c8c8;transform:scaleX(1.138);">[Null 1]</div>
<div class="r" style="left:1.2px;top:346.3px;width:256.2px;height:7.4px;background:#232323;"></div>
<svg class="o" width="767" height="431"><circle cx="55.6" cy="350.3" r="2.1" stroke="#d0d0d0" stroke-width="0.8" fill="none"/><path d="M54.8 347.6 h1.6" stroke="#d0d0d0" stroke-width="0.7"/></svg>
<div class="t" style="left:61.29px;top:349px;font-size:5.2px;color:#bcbcbc;transform:scaleX(0.842);">Scale</div>
<div class="r" style="left:1.2px;top:353.7px;width:256.2px;height:7.4px;background:#2b2b2b;"></div>
<div class="r" style="left:1.2px;top:360.8px;width:256.2px;height:0.5px;background:#1f1f1f;"></div>
<svg class="o" width="767" height="431"><path d="M2.6 357.4 q2.35 -2.8 4.7 0 q-2.35 2.8 -4.7 0z" fill="#d0d0d0"/><circle cx="4.95" cy="357.4" r="1" fill="#2b2b2b"/></svg>
<div class="r" style="left:9.2px;top:354.0px;width:20px;height:6.8px;background:#232323;"></div>
<svg class="o" width="767" height="431"><path d="M33 356.79999999999995 l1.3 1.3 l1.3 -1.3" stroke="#b0b0b0" stroke-width="0.7" fill="none"/></svg>
<div class="r" style="left:37.4px;top:354.34999999999997px;width:5.9px;height:6.0px;background:#1a1a1a;"></div>
<div class="r" style="left:37.8px;top:354.75px;width:5.1px;height:5.2px;background:#d2433c;"></div>
<div class="t" style="left:46.90px;top:356px;font-size:5.0px;color:#8a8a9c;">3</div>
<svg class="o" width="767" height="431"><path d="M60.5 355.2 h3.7 v0.9 h-1.4 v3.3 h0.6 v0.7 h-2.1 v-0.7 h0.6 v-3.3 h-1.4z" fill="#dcdcdc"/></svg>
<div class="t" style="left:67.99px;top:356px;font-size:5.2px;color:#c8c8c8;transform:scaleX(0.875);">TEXTO</div>
<div class="r" style="left:1.2px;top:361.2px;width:256.2px;height:7.4px;background:#232323;"></div>
<svg class="o" width="767" height="431"><circle cx="55.6" cy="365.2" r="2.1" stroke="#d0d0d0" stroke-width="0.8" fill="none"/><path d="M54.8 362.5 h1.6" stroke="#d0d0d0" stroke-width="0.7"/></svg>
<div class="t" style="left:61.29px;top:364px;font-size:5.2px;color:#bcbcbc;transform:scaleX(0.842);">Scale</div>
<div class="r" style="left:1.2px;top:369.2px;width:256.2px;height:7.4px;background:#2b2b2b;"></div>
<div class="r" style="left:1.2px;top:376.3px;width:256.2px;height:0.5px;background:#1f1f1f;"></div>
<svg class="o" width="767" height="431"><path d="M2.6 372.9 q2.35 -2.8 4.7 0 q-2.35 2.8 -4.7 0z" fill="#d0d0d0"/><circle cx="4.95" cy="372.9" r="1" fill="#2b2b2b"/></svg>
<div class="r" style="left:9.2px;top:369.5px;width:20px;height:6.8px;background:#232323;"></div>
<svg class="o" width="767" height="431"><path d="M33 372.29999999999995 l1.3 1.3 l1.3 -1.3" stroke="#b0b0b0" stroke-width="0.7" fill="none"/></svg>
<div class="r" style="left:37.4px;top:369.84999999999997px;width:5.9px;height:6.0px;background:#1a1a1a;"></div>
<div class="r" style="left:37.8px;top:370.25px;width:5.1px;height:5.2px;background:#d2433c;"></div>
<div class="t" style="left:46.90px;top:371px;font-size:5.0px;color:#8a8a9c;">4</div>
<div class="r" style="left:60.2px;top:370.2px;width:5.3px;height:5.4px;background:#f27282;"></div>
<div class="t" style="left:67.79px;top:371px;font-size:5.2px;color:#c8c8c8;transform:scaleX(0.958);">[Medium Red Solid 2]</div>
<div class="r" style="left:1.2px;top:376.7px;width:256.2px;height:7.4px;background:#232323;"></div>
<svg class="o" width="767" height="431"><circle cx="55.6" cy="380.7" r="2.1" stroke="#d0d0d0" stroke-width="0.8" fill="none"/><path d="M54.8 378.0 h1.6" stroke="#d0d0d0" stroke-width="0.7"/></svg>
<div class="t" style="left:61.29px;top:379px;font-size:5.2px;color:#bcbcbc;transform:scaleX(0.842);">Scale</div>
<div class="r" style="left:1.2px;top:384.2px;width:256.2px;height:7.4px;background:#2b2b2b;"></div>
<div class="r" style="left:1.2px;top:391.3px;width:256.2px;height:0.5px;background:#1f1f1f;"></div>
<svg class="o" width="767" height="431"><path d="M2.6 387.9 q2.35 -2.8 4.7 0 q-2.35 2.8 -4.7 0z" fill="#d0d0d0"/><circle cx="4.95" cy="387.9" r="1" fill="#2b2b2b"/></svg>
<div class="r" style="left:9.2px;top:384.5px;width:20px;height:6.8px;background:#232323;"></div>
<svg class="o" width="767" height="431"><path d="M33.4 386.5 l1.3 1.4 l-1.3 1.4" stroke="#b0b0b0" stroke-width="0.7" fill="none"/></svg>
<div class="r" style="left:37.4px;top:384.84999999999997px;width:5.9px;height:6.0px;background:#1a1a1a;"></div>
<div class="r" style="left:37.8px;top:385.25px;width:5.1px;height:5.2px;background:#aeadd0;"></div>
<div class="t" style="left:46.90px;top:386px;font-size:5.0px;color:#8a8a9c;">5</div>
<svg class="o" width="767" height="431"><path d="M60.8 385.2 h2.6 l1.5 1.5 v3.9 h-4.1z" fill="#eeeeee"/></svg>
<div class="t" style="left:67.79px;top:386px;font-size:5.2px;color:#c8c8c8;transform:scaleX(1.007);">[paletaColor.png]</div>
<div class="r" style="left:1.2px;top:391.5px;width:256.2px;height:7.4px;background:#2b2b2b;"></div>
<div class="r" style="left:1.2px;top:398.6px;width:256.2px;height:0.5px;background:#1f1f1f;"></div>
<svg class="o" width="767" height="431"><path d="M2.6 395.2 q2.35 -2.8 4.7 0 q-2.35 2.8 -4.7 0z" fill="#d0d0d0"/><circle cx="4.95" cy="395.2" r="1" fill="#2b2b2b"/></svg>
<div class="r" style="left:9.2px;top:391.8px;width:20px;height:6.8px;background:#232323;"></div>
<svg class="o" width="767" height="431"><path d="M33.4 393.8 l1.3 1.4 l-1.3 1.4" stroke="#b0b0b0" stroke-width="0.7" fill="none"/></svg>
<div class="r" style="left:37.4px;top:392.15px;width:5.9px;height:6.0px;background:#1a1a1a;"></div>
<div class="r" style="left:37.8px;top:392.55px;width:5.1px;height:5.2px;background:#aeadd0;"></div>
<div class="t" style="left:46.90px;top:393px;font-size:5.0px;color:#8a8a9c;">6</div>
<svg class="o" width="767" height="431"><path d="M60.8 392.5 h2.6 l1.5 1.5 v3.9 h-4.1z" fill="#eeeeee"/></svg>
<div class="t" style="left:67.79px;top:393px;font-size:5.2px;color:#c8c8c8;transform:scaleX(1.034);">[Fondo.png]</div>
<svg class="o" width="767" height="431"><path d="M2.6 328.0 q2.35 -2.8 4.7 0 q-2.35 2.8 -4.7 0z" fill="#d0d0d0"/><circle cx="4.95" cy="328.0" r="1" fill="#2b2b2b"/></svg>
<svg class="o" width="767" height="431"><g fill="#c8c8c8"><path d="M141.6 313.8 a2 2.6 0 0 1 4 0z"/><rect x="140.8" y="313.6" width="5.4" height="0.7"/></g>
<path d="M150.2 310.9 l1.7 1.8 l-1.7 1.8 l-1.7 -1.8z" fill="none" stroke="#c8c8c8" stroke-width="0.6"/>
<path d="M154.2 315 l5 -4.8" stroke="#d0d0d0" stroke-width="0.8"/></svg>
<div class="r" style="left:209.6px;top:309.5px;width:38px;height:6.2px;background:#1c1c1c;"></div>
<svg class="o" width="767" height="431"><circle cx="203.9" cy="312.7" r="2.2" stroke="#c0c0c0" stroke-width="0.7" fill="none"/><path d="M202.9 312.7 h2" stroke="#c0c0c0" stroke-width="0.6"/><path d="M243.8 312.4 l1.2 1.2 l1.2 -1.2" stroke="#b0b0b0" stroke-width="0.7" fill="none"/></svg>
<div class="t" style="left:212.19px;top:311px;font-size:5.2px;color:#d0d0d0;transform:scaleX(0.951);">None</div>
<div class="t" style="left:179.49px;top:318.6px;font-size:5.2px;color:#9c9c9c;transform:scaleX(0.965);">Add:</div>
<svg class="o" width="767" height="431"><circle cx="194.5" cy="320.7" r="2.5" fill="#e4e4e4"/><circle cx="194.5" cy="320.7" r="1.1" fill="#262626"/></svg>
<div class="r" style="left:259.4px;top:309.0px;width:507.6px;height:7.4px;background:#2d2d2d;"></div>
<div class="r" style="left:259.4px;top:316.0px;width:507.6px;height:0.7px;background:#262626;"></div>
<div class="r" style="left:259.4px;top:316.90000000000003px;width:507.6px;height:7.4px;background:#2d2d2d;"></div>
<div class="r" style="left:259.4px;top:323.90000000000003px;width:507.6px;height:0.7px;background:#262626;"></div>
<div class="r" style="left:259.4px;top:324.3px;width:507.6px;height:7.4px;background:#2d2d2d;"></div>
<div class="r" style="left:259.4px;top:331.3px;width:507.6px;height:0.7px;background:#262626;"></div>
<div class="r" style="left:259.4px;top:331.90000000000003px;width:507.6px;height:7.4px;background:#2d2d2d;"></div>
<div class="r" style="left:259.4px;top:338.90000000000003px;width:507.6px;height:0.7px;background:#262626;"></div>
<div class="r" style="left:259.4px;top:338.90000000000003px;width:507.6px;height:7.4px;background:#2d2d2d;"></div>
<div class="r" style="left:259.4px;top:345.90000000000003px;width:507.6px;height:0.7px;background:#262626;"></div>
<div class="r" style="left:259.4px;top:346.3px;width:507.6px;height:7.4px;background:#2d2d2d;"></div>
<div class="r" style="left:259.4px;top:353.3px;width:507.6px;height:0.7px;background:#262626;"></div>
<div class="r" style="left:259.4px;top:353.7px;width:507.6px;height:7.4px;background:#2d2d2d;"></div>
<div class="r" style="left:259.4px;top:360.7px;width:507.6px;height:0.7px;background:#262626;"></div>
<div class="r" style="left:259.4px;top:361.2px;width:507.6px;height:7.4px;background:#2d2d2d;"></div>
<div class="r" style="left:259.4px;top:368.2px;width:507.6px;height:0.7px;background:#262626;"></div>
<div class="r" style="left:259.4px;top:369.2px;width:507.6px;height:7.4px;background:#2d2d2d;"></div>
<div class="r" style="left:259.4px;top:376.2px;width:507.6px;height:0.7px;background:#262626;"></div>
<div class="r" style="left:259.4px;top:376.7px;width:507.6px;height:7.4px;background:#2d2d2d;"></div>
<div class="r" style="left:259.4px;top:383.7px;width:507.6px;height:0.7px;background:#262626;"></div>
<div class="r" style="left:259.4px;top:384.2px;width:507.6px;height:7.4px;background:#2d2d2d;"></div>
<div class="r" style="left:259.4px;top:391.2px;width:507.6px;height:0.7px;background:#262626;"></div>
<div class="r" style="left:259.4px;top:391.5px;width:507.6px;height:7.4px;background:#2d2d2d;"></div>
<div class="r" style="left:259.4px;top:398.5px;width:507.6px;height:0.7px;background:#262626;"></div>
<div class="r" style="left:259.4px;top:284.5px;width:507.6px;height:3.2px;background:#232323;"></div>
<div class="r" style="left:258.5px;top:287.6px;width:508.5px;height:3.7px;background:#8a8a8a;"></div>
<div class="r" style="left:259.4px;top:291.3px;width:507.6px;height:7.3px;background:#1b1b1b;"></div>
<div class="t" style="left:303.67px;top:293px;font-size:4.2px;color:#c4c4c4;transform:scaleX(1.135);">01s</div>
<div class="r" style="left:307.21999999999997px;top:297.6px;width:0.7px;height:1.6px;background:#a0a0a0;"></div>
<div class="r" style="left:307.21999999999997px;top:288.3px;width:0.6px;height:1.6px;background:#a8a8a8;"></div>
<div class="t" style="left:351.39px;top:293px;font-size:4.2px;color:#c4c4c4;transform:scaleX(1.135);">02s</div>
<div class="r" style="left:354.94px;top:297.6px;width:0.7px;height:1.6px;background:#a0a0a0;"></div>
<div class="r" style="left:354.94px;top:288.3px;width:0.6px;height:1.6px;background:#a8a8a8;"></div>
<div class="t" style="left:399.11px;top:293px;font-size:4.2px;color:#c4c4c4;transform:scaleX(1.135);">03s</div>
<div class="r" style="left:402.66px;top:297.6px;width:0.7px;height:1.6px;background:#a0a0a0;"></div>
<div class="r" style="left:402.66px;top:288.3px;width:0.6px;height:1.6px;background:#a8a8a8;"></div>
<div class="t" style="left:446.83px;top:293px;font-size:4.2px;color:#c4c4c4;transform:scaleX(1.135);">04s</div>
<div class="r" style="left:450.38px;top:297.6px;width:0.7px;height:1.6px;background:#a0a0a0;"></div>
<div class="r" style="left:450.38px;top:288.3px;width:0.6px;height:1.6px;background:#a8a8a8;"></div>
<div class="t" style="left:494.55px;top:293px;font-size:4.2px;color:#c4c4c4;transform:scaleX(1.135);">05s</div>
<div class="r" style="left:498.09999999999997px;top:297.6px;width:0.7px;height:1.6px;background:#a0a0a0;"></div>
<div class="r" style="left:498.09999999999997px;top:288.3px;width:0.6px;height:1.6px;background:#a8a8a8;"></div>
<div class="t" style="left:542.27px;top:293px;font-size:4.2px;color:#c4c4c4;transform:scaleX(1.135);">06s</div>
<div class="r" style="left:545.82px;top:297.6px;width:0.7px;height:1.6px;background:#a0a0a0;"></div>
<div class="r" style="left:545.82px;top:288.3px;width:0.6px;height:1.6px;background:#a8a8a8;"></div>
<div class="t" style="left:589.99px;top:293px;font-size:4.2px;color:#c4c4c4;transform:scaleX(1.135);">07s</div>
<div class="r" style="left:593.54px;top:297.6px;width:0.7px;height:1.6px;background:#a0a0a0;"></div>
<div class="r" style="left:593.54px;top:288.3px;width:0.6px;height:1.6px;background:#a8a8a8;"></div>
<div class="t" style="left:637.71px;top:293px;font-size:4.2px;color:#c4c4c4;transform:scaleX(1.135);">08s</div>
<div class="r" style="left:641.26px;top:297.6px;width:0.7px;height:1.6px;background:#a0a0a0;"></div>
<div class="r" style="left:641.26px;top:288.3px;width:0.6px;height:1.6px;background:#a8a8a8;"></div>
<div class="t" style="left:685.43px;top:293px;font-size:4.2px;color:#c4c4c4;transform:scaleX(1.135);">09s</div>
<div class="r" style="left:688.98px;top:297.6px;width:0.7px;height:1.6px;background:#a0a0a0;"></div>
<div class="r" style="left:688.98px;top:288.3px;width:0.6px;height:1.6px;background:#a8a8a8;"></div>
<div class="t" style="left:733.15px;top:293px;font-size:4.2px;color:#c4c4c4;transform:scaleX(1.135);">10s</div>
<div class="r" style="left:736.7px;top:297.6px;width:0.7px;height:1.6px;background:#a0a0a0;"></div>
<div class="r" style="left:736.7px;top:288.3px;width:0.6px;height:1.6px;background:#a8a8a8;"></div>
<div class="r" style="left:259.4px;top:298.6px;width:507.6px;height:7.4px;background:#6c6c6c;"></div>
<div class="r" style="left:259.4px;top:306.2px;width:507.6px;height:3.0px;background:#3f8b52;"></div>
<div class="r" style="left:259.4px;top:309.2px;width:507.6px;height:0.8px;background:#2b3a33;"></div>
<div class="r" style="left:259.4px;top:310px;width:507.6px;height:6px;background:#5462a9;"></div>
<div class="r" style="left:259.4px;top:316px;width:507.6px;height:1.6px;background:#1f2424;"></div>
<div class="r" style="left:259.4px;top:398.4px;width:507.6px;height:20.6px;background:#2e2e2e;"></div>
<div class="r" style="left:259.4px;top:419px;width:507.6px;height:4px;background:#292929;"></div>
<div class="r" style="left:259.4px;top:338.6px;width:507.6px;height:7.3px;background:#a44b45;"></div>
<div class="r" style="left:259.4px;top:353.7px;width:507.6px;height:7.3px;background:#a44b45;"></div>
<div class="r" style="left:259.4px;top:368.6px;width:507.6px;height:7.3px;background:#a44b45;"></div>
<div class="r" style="left:259.4px;top:384.1px;width:507.6px;height:5.9px;background:#8e90a4;"></div>
<div class="r" style="left:259.4px;top:390.0px;width:507.6px;height:0.8px;background:#5f6070;"></div>
<div class="r" style="left:259.4px;top:390.8px;width:507.6px;height:6.8px;background:#8e90a4;"></div>
<div class="r" style="left:259.4px;top:397.6px;width:507.6px;height:0.8px;background:#1f1f1f;"></div>
<svg class="o" width="767" height="431"><circle cx="260.3" cy="289.4" r="1.9" fill="#4b8ded"/><path d="M261.2 292 l2.8 2.8 l-2.8 2.8 l-2.8 -2.8z" fill="#4b8ded"/><rect x="259.8" y="297" width="1" height="13" fill="#4b8ded"/><circle cx="260.2" cy="303.3" r="2" fill="#4b8ded"/><rect x="260.3" y="318" width="2" height="5.5" fill="#e8e8e8"/><rect x="260" y="317.5" width="2.6" height="0.8" fill="#e8e8e8"/></svg>
<div class="r" style="left:0px;top:423px;width:767px;height:6.2px;background:#202020;"></div>
<div class="r" style="left:0px;top:422.6px;width:767px;height:0.5px;background:#181818;"></div>
<div class="r" style="left:0px;top:429.2px;width:767px;height:1.8px;background:#1c2433;"></div>
<svg class="o" width="767" height="431"><path d="M2.2 428 a2.9 2.9 0 1 1 5.6 0 v2.5 h-5.6z" fill="#3e74b8"/>
<g fill="none" stroke="#c4c4c4" stroke-width="0.8"><circle cx="11.5" cy="426.8" r="1.6"/><circle cx="14.2" cy="428.6" r="1.6"/></g>
<circle cx="21.2" cy="427.3" r="2.3" fill="#9a9a9a"/><circle cx="21.2" cy="427.3" r="1" fill="#555"/>
<path d="M261.5 427 h2.5" stroke="#c8c8c8" stroke-width="0.8"/><circle cx="270.8" cy="427.4" r="2" stroke="#c8c8c8" stroke-width="0.8" fill="none"/><path d="M272.8 427.4 h17" stroke="#3a3a3a" stroke-width="1.2"/>
<path d="M296.2 429 l1.6 -2.2 l1.2 1.2 l1 -1.6 l1.8 2.6z" fill="#c8c8c8"/></svg>
<div class="t" style="left:141.40px;top:425.4px;font-size:5.0px;color:#a8a8a8;transform:scaleX(1.003);">Toggle Switches / Modes</div>
<svg class="o" width="767" height="431"><rect x="105.8" y="323.4" width="98" height="83.6" fill="#000" opacity="0.35"/></svg>
<div class="r" style="left:106.5px;top:324px;width:97.3px;height:82.4px;background:#f0f0f0;"></div>
<div class="r" style="left:106.5px;top:324.5px;width:97.3px;height:8.3px;background:#9ccbf6;"></div>
<div class="t" style="left:117.59px;top:327px;font-size:5.2px;color:#363636;transform:scaleX(0.871);">New</div>
<svg class="o" width="767" height="431"><path d="M200.2 327.6 l1.1 1.1 l-1.1 1.1" stroke="#707070" stroke-width="0.6" fill="none"/></svg>
<div class="t" style="left:117.59px;top:337px;font-size:5.2px;color:#363636;transform:scaleX(1.013);">Composition Settings...</div>
<div class="t" style="left:117.59px;top:346px;font-size:5.2px;color:#363636;transform:scaleX(1.015);">Reveal Composition in Project</div>
<div class="t" style="left:117.59px;top:355px;font-size:5.2px;color:#363636;transform:scaleX(1.004);">Preview</div>
<svg class="o" width="767" height="431"><path d="M200.2 355.6 l1.1 1.1 l-1.1 1.1" stroke="#707070" stroke-width="0.6" fill="none"/></svg>
<div class="t" style="left:117.59px;top:364px;font-size:5.2px;color:#363636;transform:scaleX(0.988);">Switch 3D View</div>
<svg class="o" width="767" height="431"><path d="M200.2 364.6 l1.1 1.1 l-1.1 1.1" stroke="#707070" stroke-width="0.6" fill="none"/></svg>
<div class="t" style="left:117.59px;top:372px;font-size:5.2px;color:#363636;transform:scaleX(0.917);">Rename</div>
<div class="t" style="left:117.59px;top:382px;font-size:5.2px;color:#363636;transform:scaleX(0.979);">Open in Essential Graphics</div>
<div class="t" style="left:117.59px;top:392px;font-size:5.2px;color:#363636;transform:scaleX(1.005);">Composition Flowchart</div>
<div class="t" style="left:117.59px;top:400px;font-size:5.2px;color:#363636;transform:scaleX(1.049);">Composition Mini-Flowchart</div>
<svg class="o" width="767" height="431"><rect x="203.1" y="323.5" width="89.4" height="95.6" fill="#000" opacity="0.3"/></svg>
<div class="r" style="left:203.6px;top:324.1px;width:88.6px;height:94.4px;background:#f1f1f1;"></div>
<div class="r" style="left:203.6px;top:324.1px;width:0.6px;height:94.4px;background:#c8c8c8;"></div>
<div class="r" style="left:210px;top:334.3px;width:80px;height:0.4px;background:#e4e4e4;"></div>
<div class="r" style="left:204.2px;top:384.9px;width:87.2px;height:8.2px;background:#9ccbf6;"></div>
<div class="t" style="left:214.49px;top:328px;font-size:5.2px;color:#363636;transform:scaleX(0.997);">Viewer</div>
<div class="t" style="left:214.49px;top:337px;font-size:5.2px;color:#363636;transform:scaleX(0.978);">Text</div>
<div class="t" style="left:214.49px;top:346px;font-size:5.2px;color:#363636;transform:scaleX(0.913);">Solid...</div>
<div class="t" style="left:214.49px;top:354px;font-size:5.2px;color:#363636;transform:scaleX(0.930);">Light...</div>
<div class="t" style="left:214.49px;top:362px;font-size:5.2px;color:#363636;transform:scaleX(0.921);">Camera...</div>
<div class="t" style="left:214.49px;top:371px;font-size:5.2px;color:#363636;transform:scaleX(1.066);">Null Object</div>
<div class="t" style="left:214.49px;top:379px;font-size:5.2px;color:#363636;transform:scaleX(0.958);">Shape Layer</div>
<div class="t" style="left:214.49px;top:387px;font-size:5.2px;color:#363636;transform:scaleX(1.011);">Adjustment Layer</div>
<div class="t" style="left:214.49px;top:396px;font-size:5.2px;color:#363636;transform:scaleX(1.025);">Content-Aware Fill Layer...</div>
<div class="t" style="left:214.49px;top:404px;font-size:5.2px;color:#363636;transform:scaleX(0.999);">Adobe Photoshop File...</div>
<div class="t" style="left:214.49px;top:412px;font-size:5.2px;color:#363636;transform:scaleX(0.982);">MAXON CINEMA 4D File...</div>
<svg class="o" width="767" height="431"><path d="M266 389 v12.2 l2.8 -2.6 l2 4.2 l1.7 -0.8 l-2 -4.1 h3.9z" fill="#f4f4f4" stroke="#3a3a3a" stroke-width="0.7" stroke-linejoin="round"/></svg>
</body></html>
